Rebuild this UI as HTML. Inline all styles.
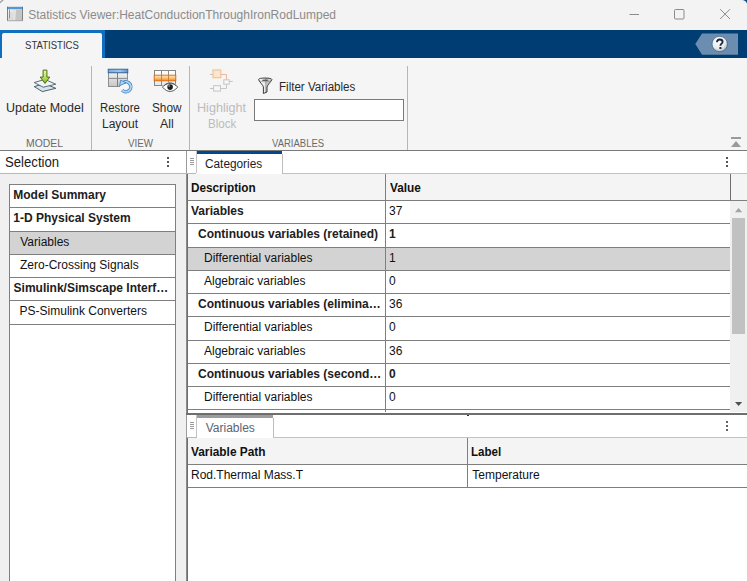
<!DOCTYPE html>
<html><head><meta charset="utf-8"><title>Statistics Viewer</title>
<style>
*{box-sizing:border-box;margin:0;padding:0}
html,body{width:747px;height:581px;overflow:hidden;background:#fff;font-family:"Liberation Sans",sans-serif}
#g{position:absolute;left:0;top:0;width:747px;height:581px}
.t{position:absolute;white-space:pre;line-height:16px;transform-origin:0 50%;font-family:"Liberation Sans",sans-serif}
</style></head><body>
<svg id="g" width="747" height="581" viewBox="0 0 747 581" shape-rendering="auto">
<rect x="0" y="0" width="747" height="30" fill="#f3f3f3" />
<rect x="0" y="30" width="747" height="28" fill="#003d73" />
<rect x="0" y="30" width="105" height="28" fill="#106ebe" />
<path d="M2 58V35a2 2 0 0 1 2-2h96a2 2 0 0 1 2 2V58z" fill="#f5f5f5"/>
<rect x="0" y="58" width="747" height="92" fill="#f5f5f5" />
<rect x="91" y="66" width="1" height="84" fill="#b6b6b6" />
<rect x="189" y="66" width="1" height="84" fill="#b6b6b6" />
<rect x="407" y="66" width="1" height="84" fill="#b6b6b6" />
<rect x="0" y="150" width="747" height="1" fill="#7a7a7a" />
<rect x="0" y="151" width="186" height="22" fill="#ffffff" />
<rect x="0" y="174" width="186" height="407" fill="#f0f0f0" />
<rect x="187" y="151" width="560" height="430" fill="#ffffff" />
<rect x="186" y="151" width="1" height="23" fill="#9a9a9a" />
<rect x="0" y="173" width="196" height="1" fill="#b8b8b8" />
<rect x="10" y="185" width="165" height="396" fill="#ffffff" />
<rect x="10" y="232" width="165" height="22" fill="#d3d3d3" />
<rect x="9" y="184" width="167" height="1" fill="#7f7f7f" />
<rect x="9" y="207" width="167" height="1" fill="#7f7f7f" />
<rect x="9" y="231" width="167" height="1" fill="#7f7f7f" />
<rect x="9" y="254" width="167" height="1" fill="#7f7f7f" />
<rect x="9" y="277" width="167" height="1" fill="#7f7f7f" />
<rect x="9" y="300" width="167" height="1" fill="#7f7f7f" />
<rect x="9" y="324" width="167" height="1" fill="#7f7f7f" />
<rect x="9" y="184" width="1" height="397" fill="#7f7f7f" />
<rect x="175" y="184" width="1" height="397" fill="#7f7f7f" />
<rect x="283" y="173" width="464" height="1" fill="#c2c2c2" />
<rect x="196" y="151" width="1" height="22" fill="#c4c4c4" />
<rect x="190" y="158" width="4" height="1" fill="#9a9a9a" />
<rect x="190" y="160" width="4" height="1" fill="#9a9a9a" />
<rect x="190" y="162" width="4" height="1" fill="#9a9a9a" />
<rect x="190" y="164" width="4" height="1" fill="#9a9a9a" />
<rect x="197" y="151" width="85" height="3" fill="#00498e" />
<rect x="282" y="154" width="1" height="20" fill="#bdbdbd" />
<rect x="167" y="157" width="2" height="2" fill="#555555" />
<rect x="167" y="161" width="2" height="2" fill="#555555" />
<rect x="167" y="165" width="2" height="2" fill="#555555" />
<rect x="726" y="157" width="2" height="2" fill="#555555" />
<rect x="726" y="161" width="2" height="2" fill="#555555" />
<rect x="726" y="165" width="2" height="2" fill="#555555" />
<rect x="187" y="174" width="560" height="26" fill="#f4f4f4" />
<rect x="730" y="201" width="17" height="211" fill="#f0f0f0" />
<rect x="188" y="248" width="542" height="22" fill="#d3d3d3" />
<rect x="188" y="200" width="559" height="1" fill="#7f7f7f" />
<rect x="188" y="223" width="542" height="1" fill="#7f7f7f" />
<rect x="188" y="247" width="542" height="1" fill="#7f7f7f" />
<rect x="188" y="270" width="542" height="1" fill="#7f7f7f" />
<rect x="188" y="293" width="542" height="1" fill="#7f7f7f" />
<rect x="188" y="316" width="542" height="1" fill="#7f7f7f" />
<rect x="188" y="340" width="542" height="1" fill="#7f7f7f" />
<rect x="188" y="363" width="542" height="1" fill="#7f7f7f" />
<rect x="188" y="386" width="542" height="1" fill="#7f7f7f" />
<rect x="188" y="409" width="542" height="1" fill="#7f7f7f" />
<rect x="385" y="174" width="1" height="238" fill="#7f7f7f" />
<rect x="730" y="174" width="1" height="26" fill="#6e6e6e" />
<rect x="732" y="218" width="13" height="116" fill="#c1c1c1" />
<path d="M735 212.2L738.6 208L742.2 212.2z" fill="#a3a3a3"/>
<path d="M735 402L742.2 402L738.6 406z" fill="#505050"/>
<rect x="186" y="174" width="1" height="239" fill="#8c8c8c" />
<rect x="187" y="174" width="1" height="239" fill="#6e6e6e" />
<rect x="186" y="438" width="1" height="143" fill="#8c8c8c" />
<rect x="187" y="438" width="1" height="143" fill="#6e6e6e" />
<rect x="186" y="413" width="561" height="2" fill="#6e6e6e" />
<rect x="186" y="415" width="1" height="23" fill="#9a9a9a" />
<rect x="196" y="415" width="1" height="22" fill="#c4c4c4" />
<rect x="187" y="437" width="10" height="1" fill="#b8b8b8" />
<rect x="190" y="422" width="4" height="1" fill="#9a9a9a" />
<rect x="190" y="424" width="4" height="1" fill="#9a9a9a" />
<rect x="190" y="426" width="4" height="1" fill="#9a9a9a" />
<rect x="190" y="428" width="4" height="1" fill="#9a9a9a" />
<rect x="197" y="415" width="76" height="3" fill="#9c9c9c" />
<rect x="273" y="418" width="1" height="20" fill="#bdbdbd" />
<rect x="274" y="437" width="473" height="1" fill="#c2c2c2" />
<rect x="726" y="421" width="2" height="2" fill="#626262" />
<rect x="726" y="425" width="2" height="2" fill="#626262" />
<rect x="726" y="429" width="2" height="2" fill="#626262" />
<rect x="467" y="415" width="2" height="1" fill="#333" />
<rect x="188" y="438" width="559" height="26" fill="#f4f4f4" />
<rect x="188" y="464" width="559" height="1" fill="#7f7f7f" />
<rect x="188" y="487" width="559" height="1" fill="#7f7f7f" />
<rect x="467" y="438" width="1" height="49" fill="#7f7f7f" />
<rect x="254.5" y="99.5" width="149" height="21" fill="#fff" stroke="#7a7a7a" stroke-width="1"/>
<rect x="731" y="137" width="10" height="2" fill="#9a9a9a" />
<path d="M731 147L736 141L741 147z" fill="#9a9a9a"/>
<g stroke="#8a8a8a" stroke-width="1" fill="none"><path d="M629.5 14.5H639"/><rect x="674.5" y="9.5" width="9.5" height="9.5" rx="1"/><path d="M720.2 9.2L730 19M730 9.2L720.2 19"/></g>
<path d="M747 0h-5.2a5.5 5.5 0 0 1 5.2 3.6z" fill="#0c4788"/>
<path d="M-0.5 3.2L3.4 -0.5" fill="none" stroke="#9c9c9c" stroke-width="1.3"/>
<path d="M695.3 44L702 33.4H738V54.7H702z" fill="#6a8db0"/>
<defs><radialGradient id="hg" cx="0.4" cy="0.3" r="0.8"><stop offset="0" stop-color="#ffffff"/><stop offset="0.6" stop-color="#e8ecf0"/><stop offset="1" stop-color="#9aa6b2"/></radialGradient></defs>
<circle cx="719.7" cy="44" r="7.7" fill="url(#hg)" stroke="#3c5a7c" stroke-width="0.7"/>
<path d="M717 42.3c0-1.9 1.2-2.8 2.8-2.8s2.8 0.9 2.8 2.4c0 1.6-2.2 2-2.2 3.8" fill="none" stroke="#1c2a3a" stroke-width="1.8"/><rect x="719.4" y="47" width="2" height="2" fill="#1c2a3a"/>
<defs>
<linearGradient id="ga" x1="0" y1="0" x2="0" y2="1"><stop offset="0" stop-color="#eafac0"/><stop offset="0.55" stop-color="#b4e060"/><stop offset="1" stop-color="#7fb526"/></linearGradient>
<linearGradient id="gc" x1="0" y1="0" x2="0" y2="1"><stop offset="0" stop-color="#f2f2f2"/><stop offset="1" stop-color="#c6c6c6"/></linearGradient>
<linearGradient id="gh" x1="0" y1="0" x2="1" y2="0"><stop offset="0" stop-color="#7aaad8"/><stop offset="0.6" stop-color="#9cc6ec"/><stop offset="1" stop-color="#5a92cc"/></linearGradient>
<linearGradient id="go" x1="0" y1="0" x2="0" y2="1"><stop offset="0" stop-color="#fde6b8"/><stop offset="0.5" stop-color="#fbc47a"/><stop offset="1" stop-color="#ee8420"/></linearGradient>
<linearGradient id="gw" x1="0" y1="0" x2="0" y2="1"><stop offset="0" stop-color="#ffffff"/><stop offset="1" stop-color="#e4e8ec"/></linearGradient>
<linearGradient id="gf" x1="0" y1="0" x2="1" y2="0"><stop offset="0" stop-color="#ffffff"/><stop offset="0.48" stop-color="#ececec"/><stop offset="0.52" stop-color="#b4b4b4"/><stop offset="1" stop-color="#e4e4e4"/></linearGradient>
<linearGradient id="gt" x1="0" y1="0" x2="1" y2="1"><stop offset="0" stop-color="#ffffff"/><stop offset="1" stop-color="#b8b8b8"/></linearGradient>
<radialGradient id="gr" cx="0.5" cy="0.5" r="0.5"><stop offset="0.45" stop-color="#e8f6ff"/><stop offset="0.75" stop-color="#8cc4ee"/><stop offset="1" stop-color="#3f7fbf"/></radialGradient>
</defs>
<!-- title icon -->
<g>
<rect x="7" y="7" width="16" height="14" fill="url(#gt)" stroke="none"/>
<rect x="16" y="10" width="5.5" height="10.5" fill="#c4c4c4"/>
<rect x="12.8" y="9.5" width="2.2" height="11" fill="#e2e2e2"/>
<rect x="10" y="12" width="2" height="8.5" fill="#dcdcdc"/>
<rect x="9" y="9.5" width="0.9" height="9" fill="#8a8a8a"/>
<rect x="7" y="9" width="1" height="12" fill="#808080"/>
<rect x="22" y="9" width="1" height="12" fill="#808080"/>
<rect x="7" y="20.3" width="16" height="0.9" fill="#a8a8a8"/>
<rect x="7" y="6.8" width="16" height="2.4" fill="#5b97cf"/>
<rect x="7" y="6.8" width="1" height="2.4" fill="#3f7cb8"/><rect x="22" y="6.8" width="1" height="2.4" fill="#3f7cb8"/>
</g>
<!-- update model -->
<g stroke-linejoin="round">
<path d="M34.2 86.6L44.5 83.6L55.8 88.3L42.3 91.6z" fill="#d4e4ee" stroke="#3e4e56" stroke-width="0.9"/>
<path d="M34.2 82.5L44.8 79.4L55.8 84.2L43.2 87.2z" fill="#eef3f6" stroke="#4e5e66" stroke-width="0.9"/>
<path d="M43.1 70.1H46.9V77.1H49.8L45 83.4L40.2 77.1H43.1z" fill="url(#ga)" stroke="#4c6c06" stroke-width="1"/>
</g>
<!-- restore layout -->
<g>
<rect x="108.5" y="72.5" width="19" height="14" fill="url(#gc)" stroke="#8e8e8e" stroke-width="1"/>
<rect x="117" y="72.8" width="1" height="13.7" fill="#7c7c7c"/>
<rect x="108.5" y="77.9" width="19" height="1" fill="#8a8a8a"/>
<rect x="108.2" y="69.2" width="19.6" height="3.6" fill="url(#gh)" stroke="#2f5f98" stroke-width="0.9"/>
<circle cx="126.6" cy="86.3" r="6.6" fill="#f5f5f5"/>
<path d="M122.2 90.2A5 5 0 1 0 123.4 82.4" fill="none" stroke="#3d7dbd" stroke-width="3.4" stroke-linecap="butt"/>
<path d="M122.2 90.2A5 5 0 1 0 123.4 82.4" fill="none" stroke="#a6d4f4" stroke-width="2"/>
<path d="M119.6 85.8L120.6 80.2L126 82.8z" fill="#a6d4f4" stroke="#3d7dbd" stroke-width="0.8" stroke-linejoin="round"/>
</g>
<!-- show all -->
<g>
<rect x="154.5" y="70.5" width="21" height="15" fill="url(#gw)" stroke="#868686" stroke-width="1"/>
<rect x="161" y="70.5" width="1" height="15" fill="#8c8c8c"/><rect x="168" y="70.5" width="1" height="15" fill="#8c8c8c"/>
<rect x="154.2" y="75.2" width="21.6" height="5.6" fill="url(#go)" stroke="#dc6a10" stroke-width="0.9"/>
<rect x="161" y="75.4" width="1" height="5.2" fill="#e07a24"/><rect x="168" y="75.4" width="1" height="5.2" fill="#e07a24"/>
<path d="M162.5 87.1C165.2 83.8 167.8 82.9 170.1 82.9S175 83.8 177.7 87.1C175 90.4 172.4 91.4 170.1 91.4S165.2 90.4 162.5 87.1z" fill="#ffffff" stroke="#f5f5f5" stroke-width="2"/>
<path d="M162.5 87.1C165.2 83.8 167.8 82.9 170.1 82.9S175 83.8 177.7 87.1C175 90.4 172.4 91.4 170.1 91.4S165.2 90.4 162.5 87.1z" fill="#ffffff" stroke="#3a3a3a" stroke-width="0.85"/>
<path d="M164 85.6C166.4 83.9 168.3 83.5 170.1 83.5S173.8 83.9 176.2 85.6" fill="none" stroke="#4a4a4a" stroke-width="0.8"/>
<circle cx="170.1" cy="87.1" r="2.8" fill="#1e1e1e"/>
<circle cx="169.1" cy="86" r="0.75" fill="#d0d0d0"/>
</g>
<!-- highlight block -->
<g fill="none">
<rect x="211.6" y="68.6" width="10.5" height="10.4" fill="#fdf6d8" opacity="0.8"/>
<path d="M210.1 74.5H212.8" stroke="#c2c2c2" stroke-width="1"/>
<path d="M221 74.5H226.5V79.3" stroke="#ecb89a" stroke-width="1"/>
<rect x="213" y="70" width="7.8" height="7.7" fill="#fbe6d4" stroke="#efbe9e" stroke-width="1.1"/>
<rect x="223.8" y="79.8" width="5.4" height="4.4" fill="#f6f6f6" stroke="#c6c6c6" stroke-width="1"/>
<path d="M229.6 81.4H232.8" stroke="#c2c2c2" stroke-width="1"/>
<path d="M226.5 84.6V88.5H221" stroke="#c6c6c6" stroke-width="1"/>
<rect x="213.6" y="85.7" width="6.9" height="5.4" fill="#f6f6f6" stroke="#c6c6c6" stroke-width="1"/>
<path d="M210.1 88.5H213.2" stroke="#c2c2c2" stroke-width="1"/>
</g>
<!-- funnel -->
<g stroke-linejoin="round">
<path d="M258.5 79.6C258.5 77.5 271.9 77.5 271.9 79.6C271.9 80.6 267 85.6 267 87V92L263.4 93.5V87C263.4 85.6 258.5 80.6 258.5 79.6z" fill="url(#gf)" stroke="#3c3c3c" stroke-width="1"/>
<path d="M259 80.2C260.5 82.4 269.9 82.4 271.4 80.2" fill="none" stroke="#7a7a7a" stroke-width="0.6"/>
<ellipse cx="265.1" cy="80.3" rx="3.4" ry="0.75" fill="#5a5a5a"/>
</g>

</svg>
<span class="t" style="left:28.2px;top:7px;font-size:12px;color:#8b8b8b;">Statistics Viewer:</span>
<span class="t" style="left:119.2px;top:7px;font-size:12px;color:#8b8b8b;">HeatConductionThroughIronRodLumped</span>
<span class="t" style="left:24.8px;top:37px;font-size:11px;color:#333;transform:scaleX(0.8689);">STATISTICS</span>
<span class="t" style="left:6.4px;top:100px;font-size:12px;color:#2a2a2a;transform:scaleX(1.0397);">Update Model</span>
<span class="t" style="left:100.1px;top:100px;font-size:12px;color:#2a2a2a;transform:scaleX(0.9463);">Restore</span>
<span class="t" style="left:102.0px;top:116px;font-size:12px;color:#2a2a2a;">Layout</span>
<span class="t" style="left:151.5px;top:100px;font-size:12px;color:#2a2a2a;transform:scaleX(0.9828);">Show</span>
<span class="t" style="left:159.9px;top:116px;font-size:12px;color:#2a2a2a;transform:scaleX(1.0308);">All</span>
<span class="t" style="left:197.3px;top:100px;font-size:12px;color:#bcbcbc;transform:scaleX(1.0522);">Highlight</span>
<span class="t" style="left:208.0px;top:116px;font-size:12px;color:#bcbcbc;transform:scaleX(0.9679);">Block</span>
<span class="t" style="left:279.2px;top:79px;font-size:12px;color:#2a2a2a;transform:scaleX(0.9641);">Filter Variables</span>
<span class="t" style="left:26.1px;top:135px;font-size:11px;color:#6a6a6a;transform:scaleX(0.9474);">MODEL</span>
<span class="t" style="left:128.0px;top:135px;font-size:11px;color:#6a6a6a;transform:scaleX(0.8929);">VIEW</span>
<span class="t" style="left:272.4px;top:135px;font-size:11px;color:#6a6a6a;transform:scaleX(0.8633);">VARIABLES</span>
<span class="t" style="left:4.8px;top:154px;font-size:14px;color:#1a1a1a;transform:scaleX(0.9393);">Selection</span>
<span class="t" style="left:205.3px;top:156px;font-size:12px;color:#1c1c2c;transform:scaleX(0.9845);">Categories</span>
<span class="t" style="left:205.7px;top:420px;font-size:12px;color:#5c6470;">Variables</span>
<span class="t" style="left:190.7px;top:180px;font-size:12px;color:#111;font-weight:bold;transform:scaleX(0.9800);">Description</span>
<span class="t" style="left:389.5px;top:180px;font-size:12px;color:#111;font-weight:bold;transform:scaleX(0.9839);">Value</span>
<span class="t" style="left:190.9px;top:444px;font-size:12px;color:#111;font-weight:bold;transform:scaleX(0.9880);">Variable Path</span>
<span class="t" style="left:470.9px;top:444px;font-size:12px;color:#111;font-weight:bold;transform:scaleX(0.9633);">Label</span>
<span class="t" style="left:13.3px;top:187px;font-size:12px;color:#202020;font-weight:bold;">Model Summary</span>
<span class="t" style="left:13.3px;top:210px;font-size:12px;color:#202020;font-weight:bold;">1-D Physical System</span>
<span class="t" style="left:20.2px;top:234px;font-size:12px;color:#111;">Variables</span>
<span class="t" style="left:20.0px;top:257px;font-size:12px;color:#111;">Zero-Crossing Signals</span>
<span class="t" style="left:13.6px;top:280px;font-size:12px;color:#202020;font-weight:bold;">Simulink/Simscape Interf…</span>
<span class="t" style="left:19.6px;top:303px;font-size:12px;color:#111;">PS-Simulink Converters</span>
<span class="t" style="left:191.0px;top:203px;font-size:12px;color:#202020;font-weight:bold;">Variables</span>
<span class="t" style="left:389.0px;top:203px;font-size:12px;color:#111;">37</span>
<span class="t" style="left:198.0px;top:226px;font-size:12px;color:#202020;font-weight:bold;">Continuous variables (retained)</span>
<span class="t" style="left:389.0px;top:226px;font-size:12px;color:#202020;font-weight:bold;">1</span>
<span class="t" style="left:204.0px;top:250px;font-size:12px;color:#111;">Differential variables</span>
<span class="t" style="left:389.0px;top:250px;font-size:12px;color:#111;">1</span>
<span class="t" style="left:204.0px;top:273px;font-size:12px;color:#111;">Algebraic variables</span>
<span class="t" style="left:389.0px;top:273px;font-size:12px;color:#111;">0</span>
<span class="t" style="left:198.0px;top:296px;font-size:12px;color:#202020;font-weight:bold;">Continuous variables (elimina…</span>
<span class="t" style="left:389.0px;top:296px;font-size:12px;color:#111;">36</span>
<span class="t" style="left:204.0px;top:319px;font-size:12px;color:#111;">Differential variables</span>
<span class="t" style="left:389.0px;top:319px;font-size:12px;color:#111;">0</span>
<span class="t" style="left:204.0px;top:343px;font-size:12px;color:#111;">Algebraic variables</span>
<span class="t" style="left:389.0px;top:343px;font-size:12px;color:#111;">36</span>
<span class="t" style="left:198.0px;top:366px;font-size:12px;color:#202020;font-weight:bold;">Continuous variables (second…</span>
<span class="t" style="left:389.0px;top:366px;font-size:12px;color:#202020;font-weight:bold;">0</span>
<span class="t" style="left:204.0px;top:389px;font-size:12px;color:#111;">Differential variables</span>
<span class="t" style="left:389.0px;top:389px;font-size:12px;color:#111;">0</span>
<span class="t" style="left:191.0px;top:467px;font-size:12px;color:#111;">Rod.Thermal Mass.T</span>
<span class="t" style="left:472.3px;top:467px;font-size:12px;color:#111;">Temperature</span>
</body></html>
